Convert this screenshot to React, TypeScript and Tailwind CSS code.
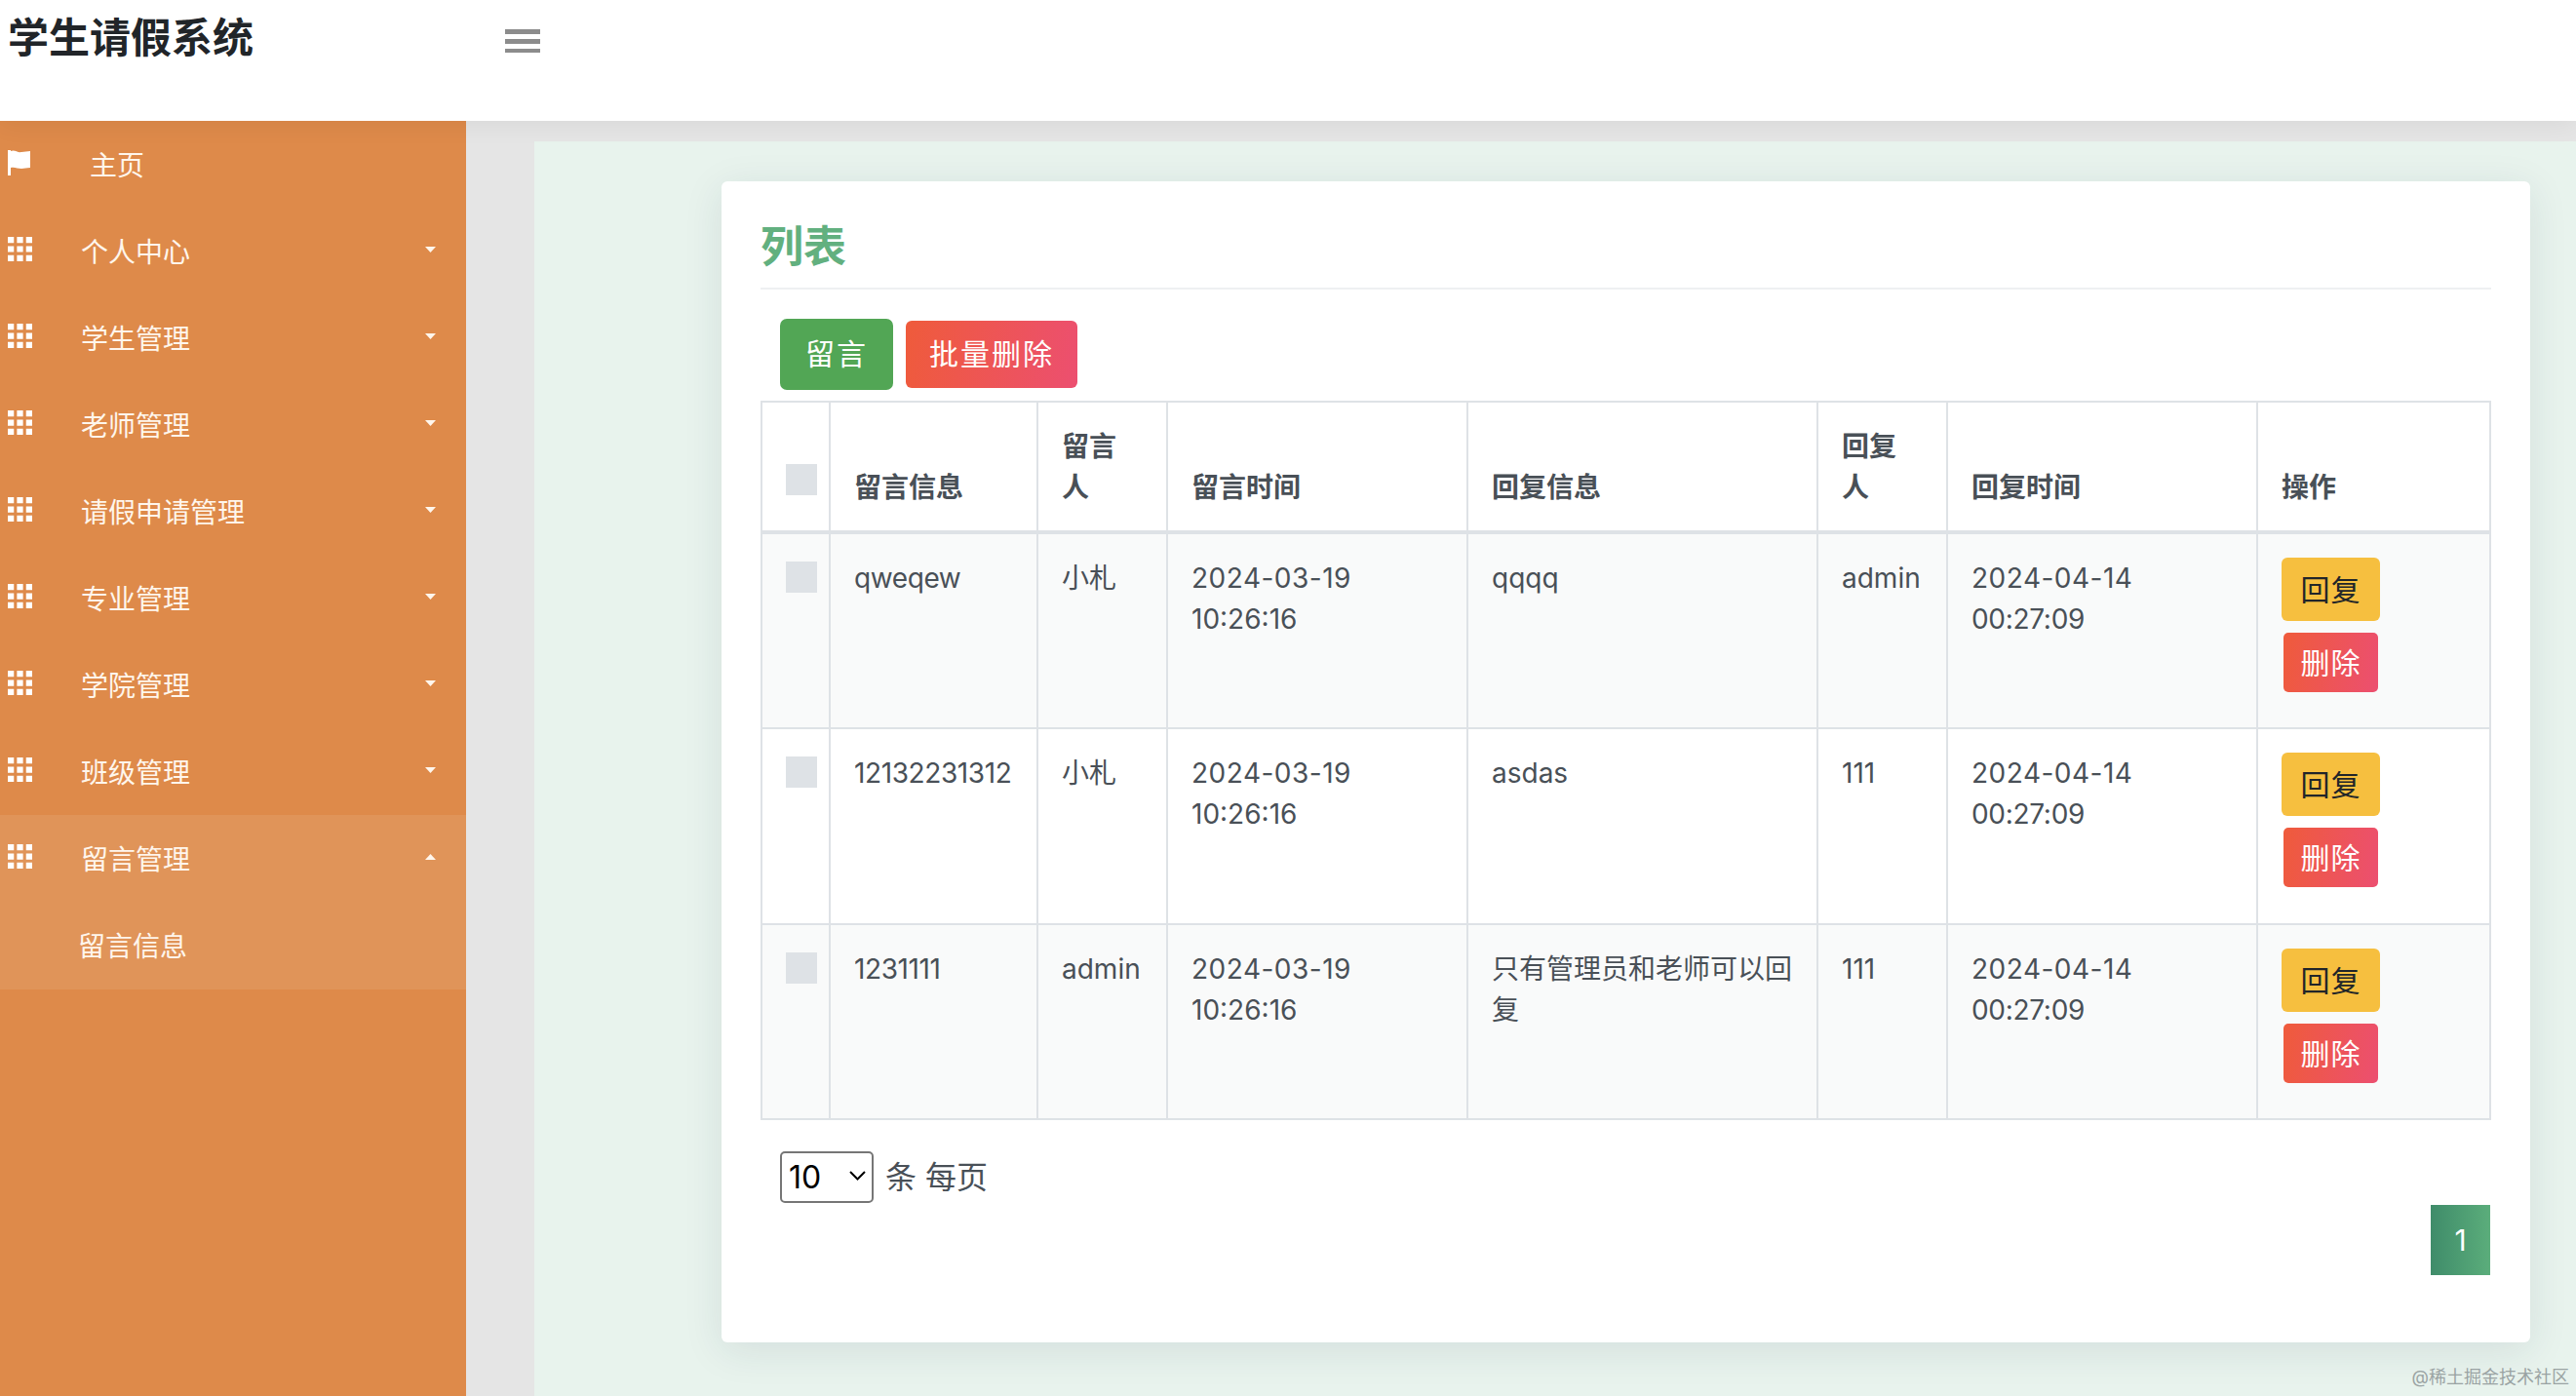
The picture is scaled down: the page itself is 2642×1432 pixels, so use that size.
const menu = ['个人中心', '学生管理', '老师管理', '请假申请管理', '专业管理', '学院管理', '班级管理']

const rows = [
  { msg: 'qweqew', user: '小札', reply: 'qqqq', by: 'admin' },
  { msg: '12132231312', user: '小札', reply: 'asdas', by: '111' },
  { msg: '1231111', user: 'admin', reply: '只有管理员和老师可以回复', by: '111' },
]

function GridIcon() {
  return (
    <svg viewBox="0 0 24 24" className="mt-[-5px] h-[25px] w-[25px] shrink-0 fill-white">
      <path d="M0 0h6v6H0zM9 0h6v6H9zM18 0h6v6h-6zM0 9h6v6H0zM9 9h6v6H9zM18 9h6v6h-6zM0 18h6v6H0zM9 18h6v6H9zM18 18h6v6h-6z" />
    </svg>
  )
}

function Caret({ up }: { up?: boolean }) {
  return (
    <svg viewBox="0 0 11 6" className="ml-auto mt-[-3px] mr-[31px] h-[6px] w-[11px] fill-[#fff6ec]">
      <path d={up ? 'M5.5 0L11 6H0z' : 'M0 0h11L5.5 6z'} />
    </svg>
  )
}

function MenuItem({ label, up }: { label: string; up?: boolean }) {
  return (
    <div className="flex h-[89px] items-center pl-[8px]">
      <GridIcon />
      <span className="ml-[50px] pt-[2px] text-[28px] text-[#fff6ec]">{label}</span>
      <Caret up={up} />
    </div>
  )
}

function Sidebar() {
  return (
    <aside className="w-[478px] shrink-0 bg-[#de8a4a]">
      <div className="flex h-[89px] items-center pl-[8px]">
        <svg viewBox="0 0 23 26" className="mt-[-4px] h-[26px] w-[23px] shrink-0 fill-white">
          <path d="M0 0h3v26H0zM3 1c4-2 7 2 11 1 3 0 6-1 9-1v17c-4 0-6 1-9 1-4 0-7-2-11-1z" />
        </svg>
        <span className="ml-[61px] pt-[2px] text-[28px] text-[#fff6ec]">主页</span>
      </div>
      {menu.map((m) => (
        <MenuItem key={m} label={m} />
      ))}
      <div className="bg-[#e09459]">
        <MenuItem label="留言管理" up />
        <div className="flex h-[90px] items-center pl-[80px] pt-[2px] text-[28px] text-[#fff6ec]">留言信息</div>
      </div>
    </aside>
  )
}

function ActionButtons() {
  return (
    <div className="flex w-[101px] flex-col items-center gap-[12px]">
      <button className="h-[65px] w-[101px] rounded-[6px] bg-[#f6bf3f] text-[30px] tracking-[1px] text-[#212529]">回复</button>
      <button className="h-[61px] w-[97px] rounded-[5px] bg-[linear-gradient(100deg,#ef5b3b,#ec4f70)] text-[30px] tracking-[1px] text-white">删除</button>
    </div>
  )
}

function Check() {
  return <div className="h-[32px] w-[32px] bg-[#dee2e6]" />
}

const th = 'border-2 border-[#dee2e6] px-[24px] pb-[23px] text-left align-bottom font-bold'
const td = 'border-2 border-[#dee2e6] px-[24px] pt-[24px] align-top font-normal'

function MessageTable() {
  return (
    <table className="w-[1773px] table-fixed border-collapse text-[28px] leading-[42px] text-[#495057]">
      <thead>
        <tr className="h-[134px] border-b-[4px] border-[#dee2e6]">
          <th className="w-[70px] border-2 border-b-[4px] border-[#dee2e6] pb-[36px] pl-[24px] align-bottom"><Check /></th>
          <th className={`w-[213px] ${th}`}>留言信息</th>
          <th className={`w-[133px] ${th}`}>留言人</th>
          <th className={`w-[308px] ${th}`}>留言时间</th>
          <th className={`w-[359px] ${th}`}>回复信息</th>
          <th className={`w-[133px] ${th}`}>回复人</th>
          <th className={`w-[318px] ${th}`}>回复时间</th>
          <th className={`w-[239px] ${th}`}>操作</th>
        </tr>
      </thead>
      <tbody>
        {rows.map((r, i) => (
          <tr key={r.msg} className={`${i === 2 ? 'h-[200px]' : 'h-[201px]'} ${i % 2 === 0 ? 'bg-[#f9fafa]' : 'bg-white'}`}>
            <td className="border-2 border-[#dee2e6] pl-[24px] pt-[28px] align-top"><Check /></td>
            <td className={`${td} tracking-[-0.4px]`}>{r.msg}</td>
            <td className={td}>{r.user}</td>
            <td className={td}><span className="tracking-[0.5px]">2024-03-19</span><br />10:26:16</td>
            <td className={td}>{r.reply}</td>
            <td className={td}>{r.by}</td>
            <td className={td}><span className="tracking-[0.5px]">2024-04-14</span><br /><span className="tracking-[-0.3px]">00:27:09</span></td>
            <td className="border-2 border-[#dee2e6] pl-[24px] pt-[24px] align-top"><ActionButtons /></td>
          </tr>
        ))}
      </tbody>
    </table>
  )
}

export default function App() {
  return (
    <div lang="zh-CN" className="relative flex h-[1432px] w-full flex-col overflow-hidden bg-[#e5e5e5] font-['Inter','Noto_Sans_CJK_SC',sans-serif]">
      <header className="relative z-10 flex h-[124px] shrink-0 items-start bg-white shadow-[0_4px_24px_rgba(0,0,0,0.06)]">
        <h1 className="w-[518px] pl-[8px] pt-[14px] text-[42px] font-bold leading-[50px] text-[#212529]">学生请假系统</h1>
        <div className="mt-[30px] flex w-[36px] flex-col gap-[5px]">
          <span className="h-[5px] bg-[#8c8c8c]" />
          <span className="h-[5px] bg-[#8c8c8c]" />
          <span className="h-[4px] bg-[#8c8c8c]" />
        </div>
      </header>
      <div className="flex flex-1">
        <Sidebar />
        <main className="flex-1 pl-[70px] pt-[21px]">
          <div className="h-full bg-[#e8f3ed] pl-[192px] pr-[47px] pt-[41px]">
            <section className="h-[1191px] rounded-[6px] bg-white px-[40px] shadow-[0_8px_40px_rgba(30,50,80,0.1)]">
              <div className="h-[111px] border-b-2 border-[#eef0f2] pt-[42px] text-[44px] font-bold leading-[50px] text-[#62b07f]">列表</div>
              <div className="mb-[11px] mt-[30px] flex h-[73px] items-center gap-[13px] pl-[20px]">
                <button className="h-[73px] w-[116px] rounded-[7px] bg-[#52a655] text-[30px] tracking-[2px] text-white">留言</button>
                <button className="h-[69px] w-[176px] rounded-[6px] bg-[linear-gradient(100deg,#ef5b3b,#ec4f70)] text-[30px] tracking-[2px] text-white">批量删除</button>
              </div>
              <MessageTable />
              <div className="mt-[32px] flex items-center gap-[12px] pl-[20px]">
                <div className="relative">
                  <select defaultValue="10" className="block h-[53px] w-[96px] appearance-none rounded-[5px] border-2 border-[#767676] bg-white pl-[7px] text-[32px] text-black">
                    <option>10</option>
                    <option>25</option>
                    <option>50</option>
                  </select>
                  <svg viewBox="0 0 17 10" className="pointer-events-none absolute right-[8px] top-[20px] h-[10px] w-[17px] fill-none stroke-black stroke-2">
                    <path d="M1 1l7.5 7.5L16 1" />
                  </svg>
                </div>
                <span className="text-[32px] text-[#495057]">条 每页</span>
              </div>
              <div className="mt-[2px] flex justify-end pr-[1px]">
                <div className="flex h-[72px] w-[61px] items-center justify-center bg-[linear-gradient(90deg,#3f8c6a,#5bad7b)] text-[30px] text-white">1</div>
              </div>
            </section>
          </div>
        </main>
      </div>
      <span className="absolute bottom-[6px] right-[7px] text-[18px] text-[#9aa3a3]">@稀土掘金技术社区</span>
    </div>
  )
}
